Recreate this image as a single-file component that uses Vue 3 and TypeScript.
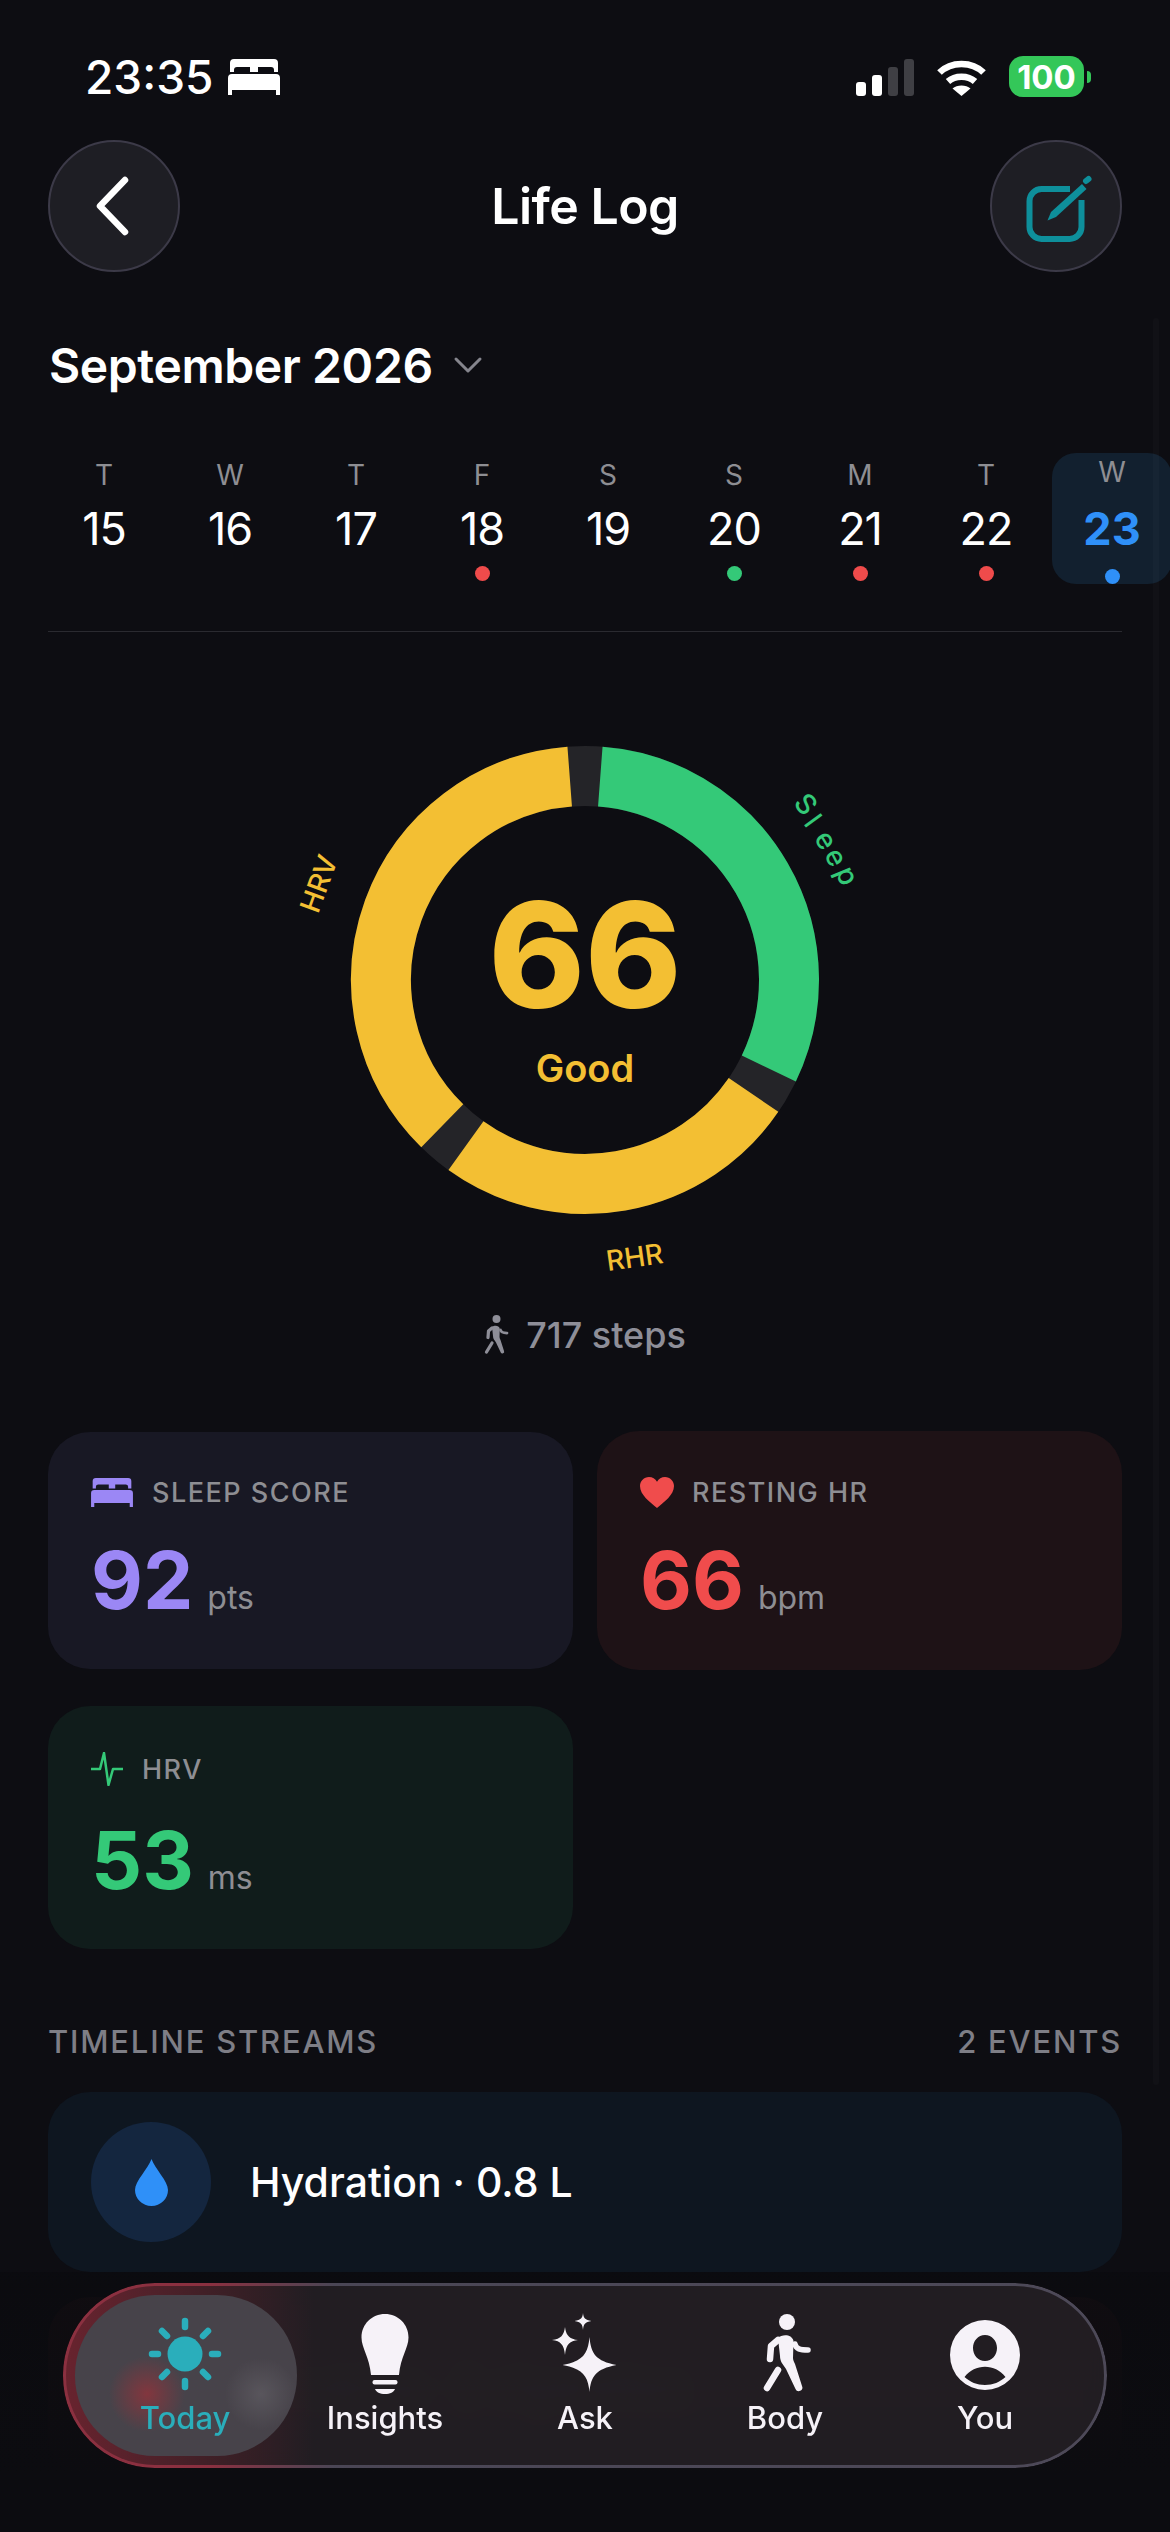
<script setup lang="ts">
// score ring segments, angles in degrees clockwise from 12 o'clock
const ringCx = 585
const ringCy = 980
const ringR = 204

function arc(from: number, to: number): string {
  const pt = (deg: number) => {
    const rad = (deg * Math.PI) / 180
    return `${(ringCx + ringR * Math.sin(rad)).toFixed(2)} ${(ringCy - ringR * Math.cos(rad)).toFixed(2)}`
  }
  return `M${pt(from)} A${ringR} ${ringR} 0 ${to - from > 180 ? 1 : 0} 1 ${pt(to)}`
}

const segments = [
  { id: 'sleep', d: arc(4.3, 115.7), color: '#34c978' },
  { id: 'rhr', d: arc(124.3, 215.7), color: '#f3bf33' },
  { id: 'hrv', d: arc(224.4, 355.7), color: '#f3bf33' }
]

const days = [
  { l: 'W', n: 14, dot: '' },
  { l: 'T', n: 15, dot: '' },
  { l: 'W', n: 16, dot: '' },
  { l: 'T', n: 17, dot: '' },
  { l: 'F', n: 18, dot: '#ef4b4b' },
  { l: 'S', n: 19, dot: '' },
  { l: 'S', n: 20, dot: '#34c978' },
  { l: 'M', n: 21, dot: '#ef4b4b' },
  { l: 'T', n: 22, dot: '#ef4b4b' },
  { l: 'W', n: 23, dot: '#2f90f8', active: true }
]

const bedTop = 'M6 0H46a4 4 0 0 1 4 4V13H46V11a3 3 0 0 0-3-3H30V13H22V8H9a3 3 0 0 0-3 3v2H2V4A4 4 0 0 1 6 0Z'
const bedBase = 'M4 15H48a4 4 0 0 1 4 4V36H48V31H4v5H0V19a4 4 0 0 1 4-4Z'

const walkerBody = 'M38 26C42 22 52 22 53.5 29L53 46C53 48 54 50 55 52L62 74A3.5 3.5 0 0 1 55.5 77L46 57C43 52 40 50 40 44Z'
</script>

<template>
  <div class="app">
    <div class="status">
      <div class="status-left">
        <span class="time">23:35</span>
        <svg class="status-bed" viewBox="0 0 52 36" fill="#fff"><path :d="bedTop" /><path :d="bedBase" /></svg>
      </div>
      <div class="status-right">
        <div class="signal">
          <i class="s1"></i><i class="s2"></i><i class="s3"></i><i class="s4"></i>
        </div>
        <svg class="wifi" viewBox="0 0 49 37" fill="none" stroke="#fff" stroke-width="6.5">
          <path d="M2.5 13.5C14 2 35 2 46.5 13.5" />
          <path d="M11 22.5C18 16 31 16 38 22.5" />
          <path d="M15.5 29.5C20 25.5 29 25.5 33.5 29.5L24.5 37Z" fill="#fff" stroke="none" />
        </svg>
        <div class="battery"><span>100</span></div>
        <div class="battery-nub"></div>
      </div>
    </div>

    <header class="topbar">
      <button class="round-btn">
        <svg width="44" height="64" viewBox="0 0 44 64" fill="none" stroke="#fff" stroke-width="6.5" stroke-linecap="round" stroke-linejoin="round">
          <path d="M33 6 8 32l25 26" />
        </svg>
      </button>
      <h1>Life Log</h1>
      <button class="round-btn">
        <svg width="72" height="72" viewBox="0 0 72 72" fill="none" stroke="#0e8f9b" stroke-width="6">
          <path d="M50 19H21.5a12 12 0 0 0-12 12v26a12 12 0 0 0 12 12h28a12 12 0 0 0 12-12V30" />
          <path d="M27.5 50.5 31 42 62 14 66.5 19 36 47Z" fill="#0e8f9b" stroke="none" />
          <path d="M66 11 68.5 9" stroke-linecap="round" />
        </svg>
      </button>
    </header>

    <div class="month">
      <span>September 2026</span>
      <svg width="30" height="18" viewBox="0 0 30 18" fill="none" stroke="#85858d" stroke-width="3" stroke-linecap="round" stroke-linejoin="round">
        <path d="M3 3l12 12L27 3" />
      </svg>
    </div>

    <div class="days">
      <div v-for="d in days" :key="d.n" class="day" :class="{ active: d.active }">
        <span class="day-letter">{{ d.l }}</span>
        <span class="day-num">{{ d.n }}</span>
        <span class="day-dot" :style="{ background: d.dot || 'transparent' }"></span>
      </div>
    </div>

    <div class="divider"></div>

    <svg class="ring" viewBox="260 700 650 600" width="650" height="600">
      <circle :cx="ringCx" :cy="ringCy" :r="ringR" fill="none" stroke="#242428" stroke-width="60" />
      <path v-for="s in segments" :key="s.id" :d="s.d" fill="none" :stroke="s.color" stroke-width="60" />
      <text class="ring-score" x="585" y="1008" text-anchor="middle">66</text>
      <text class="ring-word" x="585" y="1082" text-anchor="middle">Good</text>
      <text class="ring-label" fill="#34c978" x="792.5 803 813.5 823.7 835" y="803.5 823.5 838 854.3 871.5" rotate="50 54 59 63 67">Sleep</text>
      <text class="ring-label" fill="#f3bf33" text-anchor="middle" transform="translate(328 887) rotate(-70)">HRV</text>
      <text class="ring-label" fill="#f3bf33" text-anchor="middle" transform="translate(636 1267) rotate(-8)">RHR</text>
    </svg>

    <div class="steps">
      <svg width="26" height="42" viewBox="22 0 52 84" fill="#8e8e98">
        <circle cx="47" cy="10" r="8" />
        <path :d="walkerBody" />
        <path d="M38 28 31 34 30 47M38 58 27 76" fill="none" stroke="#8e8e98" stroke-width="6.5" stroke-linecap="round" stroke-linejoin="round" />
        <path d="M55 32C56 37 60 38 68 38" fill="none" stroke="#8e8e98" stroke-width="5.5" stroke-linecap="round" />
      </svg>
      <span>717 steps</span>
    </div>

    <div class="cards">
      <div class="card card-sleep">
        <div class="card-head">
          <svg width="42" height="29" viewBox="0 0 52 36" fill="#9b87f5"><path :d="bedTop" /><path :d="bedBase" /></svg>
          <span class="gap-bed">SLEEP SCORE</span>
        </div>
        <div class="card-value"><b style="color: #9b87f5">92</b><span>pts</span></div>
      </div>
      <div class="card card-heart">
        <div class="card-head">
          <svg width="34" height="31" viewBox="0 0 34 31" fill="#f04c4c">
            <path d="M17 31C10 25 0 18 0 9 0 4 4 0 9 0c3.400 0 6.400 1.800 8 4.800C18.600 1.800 21.600 0 25 0c5 0 9 4 9 9 0 9-10 16-17 22Z" />
          </svg>
          <span class="gap-heart">RESTING HR</span>
        </div>
        <div class="card-value"><b style="color: #f04c4c">66</b><span>bpm</span></div>
      </div>
      <div class="card card-hrv">
        <div class="card-head">
          <svg width="32" height="34" viewBox="0 0 32 34" fill="none" stroke="#34c978" stroke-width="2.5" stroke-linejoin="round">
            <path d="M0 17H9L13 1 17.500 33 22 17H32" />
          </svg>
          <span class="gap-hrv">HRV</span>
        </div>
        <div class="card-value"><b style="color: #34c978">53</b><span>ms</span></div>
      </div>
    </div>

    <div class="streams-head">
      <span>TIMELINE STREAMS</span>
      <span>2 EVENTS</span>
    </div>

    <div class="rows">
      <div class="row row-water">
        <div class="row-icon">
          <svg width="33" height="47" viewBox="0 0 33 47" fill="#2f90f8">
            <path d="M16.500 0C20 10 33 22 33 31A16.500 16 0 0 1 0 31C0 22 13 10 16.500 0Z" />
          </svg>
        </div>
        <span>Hydration · 0.8 L</span>
      </div>
      <div class="row row-smoke">
        <div class="row-icon">
          <svg width="40" height="52" viewBox="0 0 40 52" fill="#ef4b4b">
            <path d="M20 0C24 12 40 20 40 34A20 18 0 0 1 0 34C0 20 16 12 20 0Z" />
          </svg>
        </div>
        <span>Smoking · 2 cigarettes</span>
      </div>
    </div>

    <div class="fade"></div>
    <div class="scrollbar"></div>

    <nav class="tabbar">
      <div class="tab-pill"></div>
      <div class="tab tab-on">
        <svg viewBox="0 0 90 86" fill="none" stroke="#2aaebb" stroke-width="6.500" stroke-linecap="round">
          <circle cx="45" cy="42" r="17.500" fill="#2aaebb" stroke="none" />
          <path d="M45 9V15M45 69V75M12 42H18M72 42H78M22 19 27 24M63 60 68 65M68 19 63 24M27 60 22 65" />
        </svg>
        <span>Today</span>
      </div>
      <div class="tab">
        <svg viewBox="0 0 90 86" fill="#f6f2f8">
          <path d="M45 2C58 2 68.500 12 68.500 25.500 68.500 36 60.500 45 59 63H31C29.500 45 21.500 36 21.500 25.500 21.500 12 32 2 45 2Z" />
          <rect x="32.500" y="68" width="25" height="4.500" rx="2" />
          <path d="M35 77H55C54 80 50 82 45 82 40 82 36 80 35 77Z" />
        </svg>
        <span>Insights</span>
      </div>
      <div class="tab">
        <svg viewBox="0 0 90 86" fill="#f6f2f8">
          <path d="M49.500 25C51 42 56 49 76.500 53 56 57 51 64 49.500 80 48 64 43 57 22.500 53 43 49 48 42 49.500 25Z" />
          <path d="M25 15C26 23 29 27 38 28 29 29 26 33 25 43 24 33 21 29 12 28 21 27 24 23 25 15Z" />
          <path d="M43 1C43.500 6 45 8 51.500 9 45 10 43.500 12 43 18 42.500 12 41 10 34.500 9 41 8 42.500 6 43 1Z" />
        </svg>
        <span>Ask</span>
      </div>
      <div class="tab">
        <svg viewBox="0 0 90 86" fill="#f6f2f8">
          <circle cx="47" cy="10" r="8" />
          <path :d="walkerBody" />
          <path d="M38 28 31 34 30 47M38 58 27 76" fill="none" stroke="#f6f2f8" stroke-width="6.500" stroke-linecap="round" stroke-linejoin="round" />
          <path d="M55 32C56 37 60 38 68 38" fill="none" stroke="#f6f2f8" stroke-width="5.500" stroke-linecap="round" />
        </svg>
        <span>Body</span>
      </div>
      <div class="tab">
        <svg viewBox="0 0 90 86" fill="#f6f2f8" fill-rule="evenodd">
          <path d="M45 8A35 35 0 1 1 45 78 35 35 0 1 1 45 8ZM45 23C38 23 33 29 33 36 33 43 38 49 45 49 52 49 57 43 57 36 57 29 52 23 45 23ZM24.500 65C30 70 37 73 45 73 53 73 60 70 65.500 65 60 58 53 54.700 45 54.700 37 54.700 30 58 24.500 65Z" />
        </svg>
        <span>You</span>
      </div>
    </nav>
  </div>
</template>

<style>
html,
body {
  background: #0d0d12;
}
</style>

<style scoped>
.app {
  position: relative;
  width: 1170px;
  height: 2532px;
  overflow: hidden;
  background: #0d0d12;
  color: #fff;
  font-family: Inter, "Noto Sans", sans-serif;
}

.status {
  height: 140px;
  box-sizing: border-box;
  padding: 56px 79px 0 85px;
  display: flex;
  justify-content: space-between;
  align-items: flex-start;
}

.status-left {
  display: flex;
  align-items: center;
  gap: 15px;
  height: 42px;
}

.time {
  font-size: 46px;
  font-weight: 500;
  line-height: 42px;
}

.status-bed {
  width: 52px;
  height: 36px;
}

.status-right {
  display: flex;
  align-items: flex-end;
  height: 41px;
}

.signal {
  display: flex;
  align-items: flex-end;
  gap: 6px;
  height: 37px;
  margin-bottom: 1px;
}

.signal i {
  display: block;
  width: 10px;
  border-radius: 3px;
  background: #fff;
}

.signal .s1 { height: 14px; }
.signal .s2 { height: 21px; }
.signal .s3 { height: 29px; background: #3f3f44; }
.signal .s4 { height: 37px; background: #3f3f44; }

.wifi {
  width: 49px;
  height: 37px;
  margin: 0 23px 1px 23px;
}

.battery {
  width: 75px;
  height: 41px;
  border-radius: 14px;
  background: #34c759;
  display: flex;
  align-items: center;
  justify-content: center;
  font-size: 33px;
  font-weight: 700;
}

.battery-nub {
  width: 4px;
  height: 12px;
  margin: 0 0 14px 3px;
  border-radius: 0 4px 4px 0;
  background: #34c759;
}

.topbar {
  display: flex;
  align-items: center;
  justify-content: space-between;
  padding: 0 48px;
  height: 132px;
}

.topbar h1 {
  margin: 0;
  font-size: 50px;
  font-weight: 600;
  line-height: 60px;
  letter-spacing: -0.5px;
}

.round-btn {
  width: 132px;
  height: 132px;
  padding: 0;
  box-sizing: border-box;
  border-radius: 50%;
  border: 2px solid #3c3a48;
  background: #1e1e24;
  display: flex;
  align-items: center;
  justify-content: center;
}

.month {
  margin: 63px 0 0 49px;
  height: 60px;
  display: flex;
  align-items: center;
  gap: 20px;
  font-size: 48px;
  font-weight: 600;
  letter-spacing: -0.4px;
}

.days {
  margin: 58px 0 0 -85px;
  display: flex;
  height: 131px;
  width: 1260px;
}

.day {
  width: 126px;
  flex: none;
  box-sizing: border-box;
  padding-top: 6px;
  display: flex;
  flex-direction: column;
  align-items: center;
}

.day-letter {
  font-size: 28px;
  line-height: 32px;
  color: #8e8e93;
}

.day-num {
  margin-top: 13px;
  font-size: 45px;
  line-height: 50px;
  letter-spacing: -1px;
}

.day-dot {
  width: 15px;
  height: 15px;
  margin-top: 12px;
  border-radius: 50%;
}

.day.active {
  padding-top: 3px;
  margin-left: 3px;
  width: 120px;
  border-radius: 24px;
  background: #12202f;
}

.day.active .day-num {
  margin-top: 16px;
  font-weight: 700;
  color: #2f90f8;
  letter-spacing: 0;
}

.day.active .day-dot {
  margin-top: 15px;
}

.divider {
  height: 1px;
  margin: 47px 48px 0;
  background: #2a2a30;
}

.ring {
  display: block;
  margin: 68px 0 0 260px;
}

.ring-score {
  font-size: 146px;
  font-weight: 800;
  fill: #f3bf33;
}

.ring-word {
  font-size: 38px;
  font-weight: 600;
  fill: #f3bf33;
}

.ring-label {
  font-size: 28px;
  font-weight: 500;
}

.steps {
  margin-top: 10px;
  height: 50px;
  display: flex;
  align-items: center;
  justify-content: center;
  gap: 16px;
  color: #8e8e98;
  font-size: 36px;
  font-weight: 500;
}

.cards {
  margin: 71px 48px 0;
  display: grid;
  grid-template-columns: 525px 525px;
  column-gap: 24px;
  row-gap: 36px;
  align-items: center;
}

.card {
  box-sizing: border-box;
  padding: 42px 43px 0;
  border-radius: 42px;
}

.card-sleep {
  height: 237px;
  background: #181824;
}

.card-heart {
  height: 239px;
  padding-top: 43px;
  background: #1e1216;
}

.card-hrv {
  height: 243px;
  padding-top: 45px;
  background: #101c1b;
}

.card-head {
  display: flex;
  align-items: center;
  height: 36px;
  font-size: 27px;
  font-weight: 500;
  letter-spacing: 1.5px;
  color: #8e8e93;
}

.gap-bed { margin-left: 19px; }
.gap-heart { margin-left: 18px; }
.gap-hrv { margin-left: 19px; }

.card-value {
  display: flex;
  align-items: baseline;
  gap: 14px;
  margin-top: 30px;
  line-height: 80px;
}

.card-hrv .card-value {
  margin-top: 33px;
}

.card-value b {
  font-size: 80px;
  font-weight: 700;
}

.card-value span {
  font-size: 32px;
  color: #8e8e93;
}

.streams-head {
  margin: 74px 48px 0;
  height: 36px;
  display: flex;
  justify-content: space-between;
  align-items: center;
  font-size: 31px;
  font-weight: 500;
  letter-spacing: 1.8px;
  color: #7e7e86;
}

.rows {
  margin: 33px 48px 0;
  display: flex;
  flex-direction: column;
  gap: 25px;
}

.row {
  height: 180px;
  box-sizing: border-box;
  padding-left: 43px;
  border-radius: 42px;
  display: flex;
  align-items: center;
  gap: 39px;
  font-size: 41px;
  font-weight: 500;
}

.row-water {
  background: #0e1620;
}

.row-smoke {
  background: #1e1216;
}

.row-icon {
  width: 120px;
  height: 120px;
  flex: none;
  border-radius: 50%;
  display: flex;
  align-items: center;
  justify-content: center;
}

.row-water .row-icon {
  background: #14263f;
}

.row-smoke .row-icon {
  background: #351a1f;
}

.fade {
  position: absolute;
  left: 0;
  right: 0;
  top: 2272px;
  bottom: 0;
  background: linear-gradient(rgba(10, 10, 14, 0.7), rgba(12, 12, 16, 1) 78%);
}

.scrollbar {
  position: absolute;
  left: 1153px;
  top: 318px;
  width: 6px;
  height: 1767px;
  border-radius: 3px;
  background: rgba(255, 255, 255, 0.018);
}

.tabbar {
  position: absolute;
  left: 63px;
  top: 2283px;
  width: 1044px;
  height: 185px;
  box-sizing: border-box;
  padding: 29px 24px 0;
  border-radius: 92px;
  display: flex;
  justify-content: space-between;
  overflow: hidden;
  background:
    linear-gradient(90deg, rgba(112, 36, 48, 0.9), rgba(112, 36, 48, 0.7) 6%, rgba(112, 36, 48, 0) 24%),
    rgba(36, 31, 36, 0.93);
  backdrop-filter: blur(9px);
}

.tabbar::before {
  content: "";
  position: absolute;
  inset: 0;
  padding: 3px;
  border-radius: inherit;
  background: linear-gradient(90deg, #8b3040, #8b3040 14%, #4a4655 26%, #4d4958);
  -webkit-mask: linear-gradient(#000 0 0) content-box, linear-gradient(#000 0 0);
  -webkit-mask-composite: xor;
  mask-composite: exclude;
}

.tab-pill {
  position: absolute;
  left: 12px;
  top: 12px;
  width: 222px;
  height: 161px;
  border-radius: 80px;
  background:
    radial-gradient(circle at 72px 99px, rgba(150, 50, 58, 0.75), rgba(150, 50, 58, 0) 38px),
    radial-gradient(circle at 186px 99px, rgba(110, 108, 114, 0.45), rgba(110, 108, 114, 0) 36px),
    #47434a;
}

.tab {
  position: relative;
  width: 196px;
  display: flex;
  flex-direction: column;
  align-items: center;
  color: #f6f2f8;
  font-size: 31px;
  font-weight: 500;
  line-height: 40px;
}

.tab svg {
  width: 90px;
  height: 86px;
  flex: none;
}

.tab-on {
  color: #2aaebb;
}
</style>
